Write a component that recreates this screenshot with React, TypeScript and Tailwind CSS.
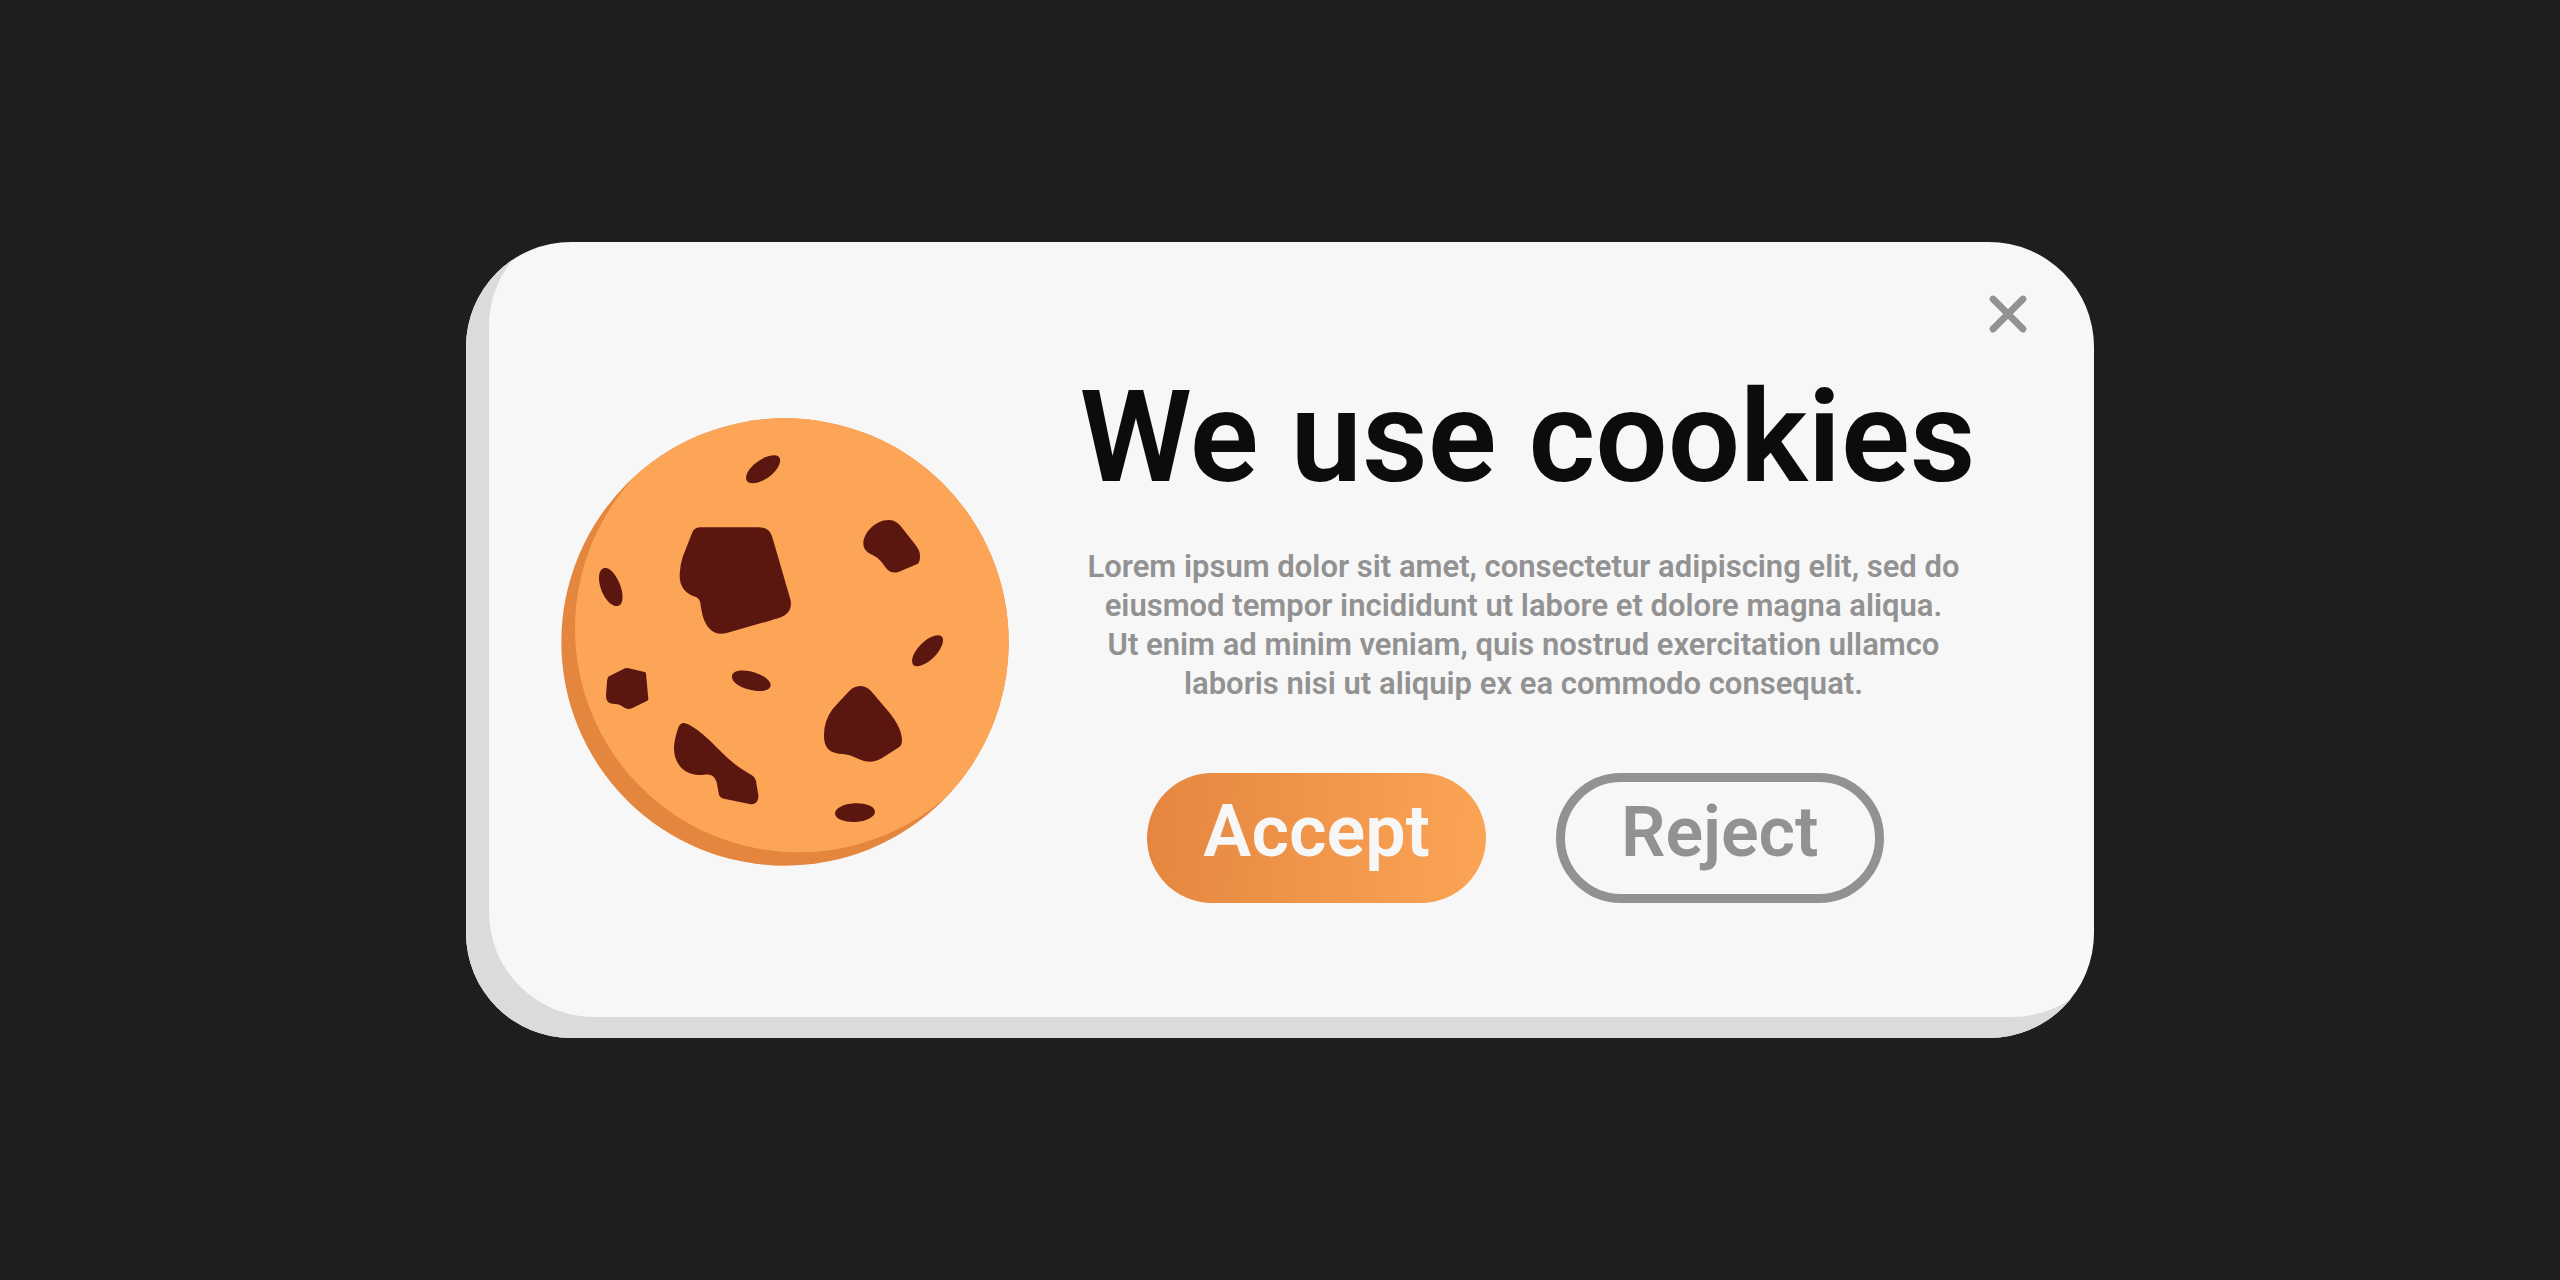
import { useState } from "react";
import { X } from "lucide-react";

function Cookie() {
  return (
    <svg
      viewBox="0 0 1344 1344"
      className="w-[448px] shrink-0"
      role="img"
      aria-label="Cookie"
    >
      <defs>
        <clipPath id="cookie-edge">
          <circle cx="672" cy="672" r="671" />
        </clipPath>
      </defs>

      <circle cx="672" cy="672" r="671" fill="#e5863f" />
      <circle
        cx="713"
        cy="632"
        r="671"
        fill="#fca556"
        clipPath="url(#cookie-edge)"
      />

      {/* upper chips */}
      <g fill="#5b170f" transform="translate(-63 -53)">
        <path d="M480 381H655C678 381 691 390 697 411L751 597C757 623 747 640 722 651Q712 655 690 661L560 698C522 707 499 684 488 646Q483 625 481 608Q478 593 466 589C436 581 418 559 419 522Q420 495 428 470L455 401Q461 381 480 381Z" />
        <path d="M1046 359Q1065 359 1080 375L1122 428Q1140 449 1140 466Q1140 486 1132 491L1077 514C1061 520 1048 516 1038 503L1024 484Q1016 473 1002 466C980 457 970 447 970 429C970 399 1005 359 1046 359Z" />
        <path d="M618 234C617 204 668 164 705 165C717 166 722 174 720 185C714 216 670 248 637 249C626 249 619 244 618 234Z" />
        <path d="M193 503C171 508 174 549 189 580C201 605 219 619 233 617C251 614 252 582 239 550C226 519 208 500 193 503Z" />
      </g>

      {/* lower chips */}
      <g fill="#5b170f" transform="translate(-63 637)">
        <path d="M1195 15C1172 13 1134 43 1120 75C1112 94 1117 109 1132 108C1160 107 1204 68 1209 33Q1211 17 1195 15Z" />
        <path d="M576 137C578 120 611 116 646 127C673 136 692 151 692 165C690 183 659 187 624 177C594 169 574 153 576 137Z" />
        <path d="M203 143Q204 139 209 137L255 114Q260 112 266 114L314 125Q318 126 318 130L325 206Q325 209 322 211L276 234Q265 238 255 233L241 225Q234 221 223 221C205 221 198 212 198 195L201 153Z" />
        <path d="M960 167Q978 167 993 182L1046 244Q1087 294 1086 333Q1086 344 1077 351L1025 384C1003 398 976 396 956 386L933 376Q920 371 896 370C864 366 851 348 852 312Q853 270 876 239Q882 231 930 180Q942 168 960 167Z" />
        <path d="M431 278C451 279 496 315 532 353Q570 393 605 416L633 433Q648 441 649 459L655 494C656 512 648 522 632 522L552 505Q540 502 537 493L531 461C526 436 512 431 492 433C439 440 401 405 402 352Q402 329 415 292Q420 278 431 278Z" />
        <ellipse
          cx="945"
          cy="547"
          rx="60"
          ry="28"
          transform="rotate(-3 945 547)"
        />
      </g>
    </svg>
  );
}

export default function App() {
  const [open, setOpen] = useState(true);

  const close = () => setOpen(false);

  return (
    <main className="flex min-h-screen items-center justify-center bg-[#1e1e1e] font-[Roboto,'Liberation_Sans',sans-serif] font-semibold">
      {open && (
        <section
          aria-labelledby="cookie-title"
          className="relative flex w-full max-w-[1628px] items-center rounded-[105px] bg-[#f7f7f7] py-[135px] pr-12 pl-[95px] shadow-[inset_23px_-21px_0_#dbdbdb]"
        >
          <button
            type="button"
            aria-label="Close"
            onClick={close}
            className="absolute top-[42px] right-14 cursor-pointer text-[#929292]"
          >
            <X size={60} strokeWidth={2.7} />
          </button>

          <div className="pt-1">
            <Cookie />
          </div>

          <div className="flex flex-1 flex-col items-center text-center">
            <h1
              id="cookie-title"
              className="text-[128px] leading-[120px] text-[#0c0c0c]"
            >
              We use cookies
            </h1>

            <p className="mt-[50px] pr-2 text-[31px] leading-[39px] text-[#929292]">
              Lorem ipsum dolor sit amet, consectetur adipiscing elit, sed do
              <br />
              eiusmod tempor incididunt ut labore et dolore magna aliqua.
              <br />
              Ut enim ad minim veniam, quis nostrud exercitation ullamco
              <br />
              laboris nisi ut aliquip ex ea commodo consequat.
            </p>

            {/* ACTIONS */}
            <div className="mt-[70px] flex gap-[70px] pr-6">
              <button
                type="button"
                onClick={close}
                className="h-[130px] cursor-pointer rounded-full bg-linear-[95deg,#e5863f,#fca556] px-14 pb-3 text-[72px] leading-none text-[#f7f7f7]"
              >
                Accept
              </button>
              <button
                type="button"
                onClick={close}
                className="h-[130px] cursor-pointer rounded-full border-9 border-[#929292] px-14 pb-3 text-[70px] leading-none text-[#929292]"
              >
                Reject
              </button>
            </div>
          </div>
        </section>
      )}
    </main>
  );
}
